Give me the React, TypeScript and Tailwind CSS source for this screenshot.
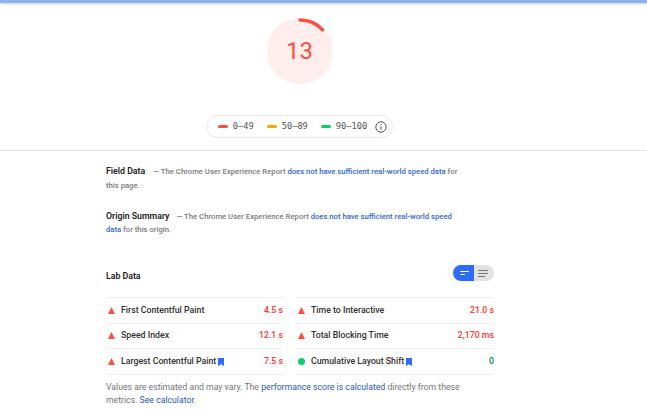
import React from 'react';

const Bookmark = () => (
  <svg className="w-[6px] h-[8px] ml-[2px] inline-block" viewBox="0 0 6 8">
    <path d="M0 0h6v8L3 6.3 0 8z" fill="#2e6bff" />
  </svg>
);

const Metric = ({ name, value, color, pass, mark }: { name: string; value: string; color: string; pass?: boolean; mark?: boolean }) => (
  <div className="h-[25.67px] flex items-center border-b border-[#efefef]">
    <span className="w-[15px] shrink-0 flex justify-start pl-[2px]">
      {pass ? (
        <span className="w-[7px] h-[7px] rounded-full bg-[#0cce6b]" />
      ) : (
        <svg className="w-[7px] h-[7px]" viewBox="0 0 7 7">
          <path d="M3.5 0L7 7H0z" fill="#ff4e42" />
        </svg>
      )}
    </span>
    <span className="flex items-center text-[8.75px] font-medium text-[#303030]">
      {name}
      {mark && <Bookmark />}
    </span>
    <span className={`ml-auto text-[8.75px] font-medium ${color}`}>{value}</span>
  </div>
);

const Legend = ({ color, label }: { color: string; label: string }) => (
  <span className="flex items-center gap-[5px]">
    <span className={`w-[10px] h-[3px] rounded-full ${color}`} />
    <span className="font-['DejaVu_Sans_Mono',monospace] text-[8.7px] text-[#555]">{label}</span>
  </span>
);

export default function App() {
  return (
    <div className="w-[647px] h-[412px] overflow-hidden bg-white font-['Roboto',sans-serif]">
      <div className="h-[3px] bg-[#8db0ec] shadow-[0_1px_3px_rgba(0,0,0,0.2)]" />

      <div className="h-[148px] border-b border-[#e4e4e4]">
        <div className="w-[599px] flex flex-col items-center pt-[15px]">
          <div className="relative w-[66px] h-[66px] rounded-full bg-[#ffeeec] flex items-center justify-center">
            <svg className="absolute inset-0" viewBox="0 0 66 66" width="66" height="66">
              <path d="M33 2 A31 31 0 0 1 55.6 11.8" fill="none" stroke="#ff4e42" strokeWidth="3.4" strokeLinecap="round" />
            </svg>
            <span className="text-[24px] leading-none text-[#ff4e42]">13</span>
          </div>
          <div className="mt-[31px] h-[23px] pl-[11px] pr-[5px] flex items-center gap-[13px] rounded-full border border-[#eaeaea]">
            <Legend color="bg-[#ff4e42]" label="0–49" />
            <Legend color="bg-[#ffa400]" label="50–89" />
            <Legend color="bg-[#0cce6b]" label="90–100" />
            <svg className="w-[12px] h-[12px] -ml-[5px]" viewBox="0 0 12 12" fill="none" stroke="#555">
              <circle cx="6" cy="6" r="5.2" />
              <path d="M6 5.2v3.6M6 3v1" />
            </svg>
          </div>
        </div>
      </div>

      <div className="w-[388px] ml-[106px]">
        <p className="mt-[14px] w-[355px] text-[7.7px] leading-[13.5px] font-medium text-[#7c7c7c]">
          <span className="text-[8.75px] font-semibold text-[#212121] mr-[8px]">Field Data</span>
          — The Chrome User Experience Report <span className="text-[#3367d6]">does not have sufficient real-world speed data</span> for this page.
        </p>
        <p className="mt-[17.5px] w-[355px] text-[7.7px] leading-[13.5px] font-medium text-[#7c7c7c]">
          <span className="text-[8.75px] font-semibold text-[#212121] mr-[7px]">Origin Summary</span>
          — The Chrome User Experience Report <span className="text-[#3367d6]">does not have sufficient real-world speed data</span> for this origin.
        </p>

        <div className="mt-[31.5px] flex items-center justify-between h-[18px]">
          <span className="text-[8.75px] font-semibold text-[#212121]">Lab Data</span>
          <div className="flex self-start -mt-[3px] h-[16px] w-[41px] rounded-full overflow-hidden">
            <div className="w-[21px] bg-[#2e6bff] flex flex-col justify-center gap-[2px] pl-[7px]">
              <span className="w-[9px] h-[1px] bg-white" />
              <span className="w-[5px] h-[1px] bg-white" />
            </div>
            <div className="flex-1 bg-[#e2e2e2] flex flex-col justify-center gap-[2px] pl-[4px]">
              <span className="w-[10px] h-[1px] bg-[#777]" />
              <span className="w-[10px] h-[1px] bg-[#777]" />
              <span className="w-[7px] h-[1px] bg-[#777]" />
            </div>
          </div>
        </div>

        <div className="mt-[11px] grid grid-cols-[177px_1fr] gap-x-[13px]">
          <div className="border-t border-[#efefef]">
            <Metric name="First Contentful Paint" value="4.5 s" color="text-[#f33]" />
            <Metric name="Speed Index" value="12.1 s" color="text-[#f33]" />
            <Metric name="Largest Contentful Paint" value="7.5 s" color="text-[#f33]" mark />
          </div>
          <div className="border-t border-[#efefef]">
            <Metric name="Time to Interactive" value="21.0 s" color="text-[#f33]" />
            <Metric name="Total Blocking Time" value="2,170 ms" color="text-[#f33]" />
            <Metric name="Cumulative Layout Shift" value="0" color="text-[#0a8a4a]" pass mark />
          </div>
        </div>

        <p className="mt-[6px] w-[358px] text-[8.7px] leading-[13px] text-[#757575]">
          Values are estimated and may vary. The <span className="text-[#2a5bb0]">performance score is calculated</span> directly from these metrics. <span className="text-[#2a5bb0]">See calculator.</span>
        </p>
      </div>
    </div>
  );
}
